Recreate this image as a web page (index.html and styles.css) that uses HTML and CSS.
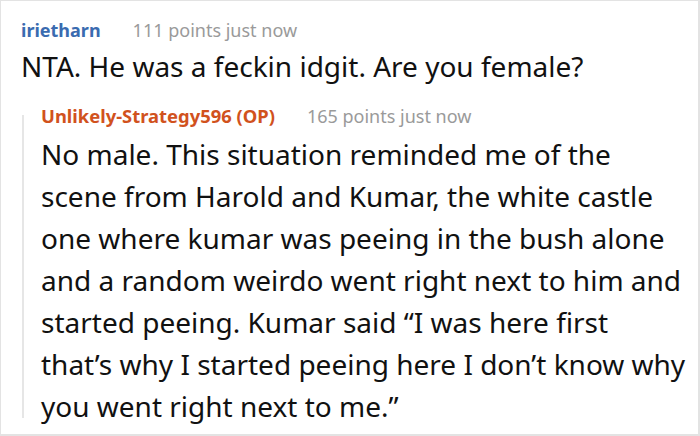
FILE: index.html
```html
<!DOCTYPE html>
<html>
<head>
<meta charset="utf-8">
<link rel="stylesheet" href="styles.css">
</head>
<body>
<div class="card">
  <div class="comment">
    <div class="meta"><span class="user">irietharn</span><span class="info">111 points just now</span></div>
    <p class="text">NTA. He was a feckin idgit. Are you female?</p>
    <div class="reply">
      <div class="thread"></div>
      <div class="reply-body">
        <div class="meta"><span class="user op">Unlikely-Strategy596 (OP)</span><span class="info">165 points just now</span></div>
        <p class="text long">No male. This situation reminded me of the scene from Harold and Kumar, the white castle one where kumar was peeing in the bush alone and a random weirdo went right next to him and started peeing. Kumar said “I was here first<br>that’s why I started peeing here I don’t know why you went right next to me.”</p>
      </div>
    </div>
  </div>
</div>
</body>
</html>
```

FILE: styles.css
```css
html, body {
  margin: 0;
  padding: 0;
  background: #ffffff;
}
.card {
  box-sizing: border-box;
  width: 700px;
  height: 436px;
  border-top: 1px solid #e3e3e3;
  border-left: 1px solid #e3e3e3;
  border-right: 2px solid #e3e3e3;
  border-bottom: 2px solid #e3e3e3;
  padding: 16px 9px 0 20px;
  font-family: "Noto Sans", sans-serif;
  overflow: hidden;
}
.meta {
  font-size: 18px;
  line-height: 26px;
  display: flex;
  gap: 32px;
}
.user {
  font-weight: 700;
  color: #3a6bb0;
}
.user.op {
  font-size: 18.4px;
  color: #d1521d;
}
.info {
  color: #9a9a9a;
}
.text {
  margin: 3px 0 0;
  font-size: 28px;
  line-height: 40px;
  color: #111111;
}
.reply {
  display: flex;
  margin-top: 17px;
}
.thread {
  flex: none;
  width: 2px;
  margin: 12px 17px 9px 1px;
  background: #e6e6e6;
}
.reply-body {
  flex: 1;
}
.text.long {
  font-size: 28px;
  line-height: 42px;
  margin-top: 4px;
}
```
